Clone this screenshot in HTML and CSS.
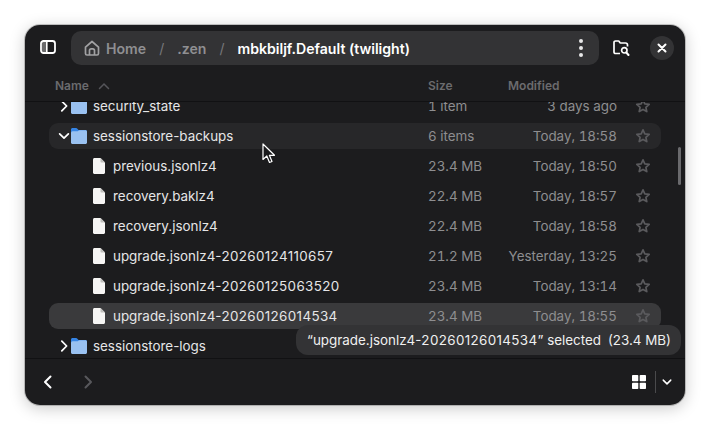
FILE: index.html
```html
<!DOCTYPE html>
<html lang="en">
<head>
<meta charset="utf-8">
<title>Files</title>
<link rel="stylesheet" href="styles.css">
</head>
<body>
<svg class="defs" width="0" height="0" aria-hidden="true">
  <defs>
    <symbol id="folder" viewBox="0 0 16 16">
      <path d="M0 1.5C0 .7.7 0 1.5 0H5c.6 0 1 .3 1.4.8L7.5 2H14.5C15.3 2 16 2.7 16 3.5V6H0Z" fill="#3584e4"/>
      <path d="M0 5C0 4 .7 3.300 1.500 3.300 3.500 3.300 5.500 3.300 6.200 3.300 7 3.300 7.500 2.200 8.500 2.200H14.500C15.300 2.200 16 2.900 16 3.700V14.500C16 15.300 15.300 16 14.500 16H1.500C.7 16 0 15.300 0 14.500Z" fill="#99c1f1"/>
    </symbol>
    <symbol id="file" viewBox="0 0 12 16">
      <path d="M1.500 0H7.500L12 4.500V14.500C12 15.300 11.300 16 10.500 16H1.500C.7 16 0 15.300 0 14.500V1.500C0 .7.7 0 1.500 0Z" fill="#f6f5f4"/>
      <path d="M7.500 0 12 4.500H8.500C7.900 4.500 7.500 4.100 7.500 3.500Z" fill="#c0bfbc"/>
    </symbol>
    <symbol id="star" viewBox="0 0 16 16">
      <path d="M8 1.900 9.800 5.900 14.200 6.400 10.900 9.300 11.800 13.600 8 11.400 4.200 13.600 5.100 9.300 1.800 6.400 6.200 5.900Z" fill="none" stroke="currentColor" stroke-width="1.700" stroke-linejoin="round"/>
    </symbol>
    <symbol id="right" viewBox="0 0 16 16">
      <path d="M5.500 2.500 11 8 5.500 13.500" fill="none" stroke="currentColor" stroke-width="2" stroke-linecap="round" stroke-linejoin="round"/>
    </symbol>
    <symbol id="down" viewBox="0 0 16 16">
      <path d="M3 5.500 8 10.500 13 5.500" fill="none" stroke="currentColor" stroke-width="2" stroke-linecap="round" stroke-linejoin="round"/>
    </symbol>
  </defs>
</svg>

<main class="window">
  <header class="headerbar">
    <button class="icon-btn sidebar-btn" aria-label="Toggle sidebar">
      <svg width="16" height="14" viewBox="0 0 16 14"><path d="M2 2H6V12H2Z" fill="#fff" fill-opacity=".35"/><rect x="1" y="1" width="14" height="12" rx="2.500" fill="none" stroke="#fff" stroke-width="1.800"/><path d="M6.800 1V13" stroke="#fff" stroke-width="1.600"/></svg>
    </button>
    <nav class="pathbar">
      <svg class="home" width="16" height="16" viewBox="0 0 16 16"><path d="M1.500 7.200 8 1.500 14.500 7.200V13.500C14.500 14.300 13.900 15 13 15H3C2.100 15 1.500 14.300 1.500 13.500Z M5.500 15V10.500C5.500 9.500 6.300 8.800 7.200 8.800H8.800C9.700 8.800 10.500 9.500 10.500 10.500V15" fill="none" stroke="#a1a1a3" stroke-width="1.700" stroke-linejoin="round"/></svg>
      <span class="crumb">Home</span>
      <span class="sep">/</span>
      <span class="crumb zen">.zen</span>
      <span class="sep">/</span>
      <span class="crumb current">mbkbiljf.Default (twilight)</span>
      <span class="kebab" aria-label="Menu"><i></i><i></i><i></i></span>
    </nav>
    <button class="icon-btn search-btn" aria-label="Search folder">
      <svg width="17" height="16" viewBox="0 0 17 16"><path d="M7 13.500H2.500C1.600 13.500 1 12.900 1 12V2.500C1 1.600 1.600 1 2.500 1H5.500C6.300 1 6.700 3 7.500 3H12.500C13.700 3 14.500 3.800 14.500 5V6.500" fill="none" stroke="#fff" stroke-width="1.700" stroke-linejoin="round"/><circle cx="11.300" cy="10.300" r="2.700" fill="none" stroke="#fff" stroke-width="1.700"/><path d="M13.300 12.500 15.500 15" stroke="#fff" stroke-width="2" stroke-linecap="round"/></svg>
    </button>
    <button class="close" aria-label="Close">
      <svg width="10" height="10" viewBox="0 0 10 10"><path d="M1.500 1.500 8.500 8.500M8.500 1.500 1.500 8.500" stroke="#fff" stroke-width="2" stroke-linecap="round"/></svg>
    </button>
  </header>

  <div class="colhead">
    <span class="col-name">Name<svg width="12" height="8" viewBox="0 0 12 8"><path d="M1.500 6.500 6 2 10.500 6.500" fill="none" stroke="#55555a" stroke-width="1.500" stroke-linecap="round"/></svg></span>
    <span class="col-size">Size</span>
    <span class="col-mod">Modified</span>
  </div>

  <section class="list">
    <div class="rows">
      <div class="row">
        <span class="name"><svg class="exp"><use href="#right"/></svg><svg class="folder"><use href="#folder"/></svg><span>security_state</span></span>
        <span class="size">1 item</span><span class="mod">3 days ago</span><svg class="star"><use href="#star"/></svg>
      </div>
      <div class="row hover">
        <span class="name"><svg class="exp"><use href="#down"/></svg><svg class="folder"><use href="#folder"/></svg><span>sessionstore-backups</span></span>
        <span class="size">6 items</span><span class="mod">Today, 18:58</span><svg class="star"><use href="#star"/></svg>
      </div>
      <div class="row child">
        <span class="name"><svg class="file"><use href="#file"/></svg><span>previous.jsonlz4</span></span>
        <span class="size">23.4 MB</span><span class="mod">Today, 18:50</span><svg class="star"><use href="#star"/></svg>
      </div>
      <div class="row child">
        <span class="name"><svg class="file"><use href="#file"/></svg><span>recovery.baklz4</span></span>
        <span class="size">22.4 MB</span><span class="mod">Today, 18:57</span><svg class="star"><use href="#star"/></svg>
      </div>
      <div class="row child">
        <span class="name"><svg class="file"><use href="#file"/></svg><span>recovery.jsonlz4</span></span>
        <span class="size">22.4 MB</span><span class="mod">Today, 18:58</span><svg class="star"><use href="#star"/></svg>
      </div>
      <div class="row child">
        <span class="name"><svg class="file"><use href="#file"/></svg><span>upgrade.jsonlz4-<span class="stamp">20260124110657</span></span></span>
        <span class="size">21.2 MB</span><span class="mod">Yesterday, 13:25</span><svg class="star"><use href="#star"/></svg>
      </div>
      <div class="row child">
        <span class="name"><svg class="file"><use href="#file"/></svg><span>upgrade.jsonlz4-<span class="stamp">20260125063520</span></span></span>
        <span class="size">23.4 MB</span><span class="mod">Today, 13:14</span><svg class="star"><use href="#star"/></svg>
      </div>
      <div class="row child selected">
        <span class="name"><svg class="file"><use href="#file"/></svg><span>upgrade.jsonlz4-<span class="stamp">20260126014534</span></span></span>
        <span class="size">23.4 MB</span><span class="mod">Today, 18:55</span><svg class="star"><use href="#star"/></svg>
      </div>
      <div class="row">
        <span class="name"><svg class="exp"><use href="#right"/></svg><svg class="folder"><use href="#folder"/></svg><span>sessionstore-logs</span></span>
      </div>
    </div>
    <div class="scrollbar"></div>
    <div class="toast"><span>“upgrade.jsonlz4-<span class="stamp">20260126014534</span>” selected</span><span>(23.4 MB)</span></div>
    <svg class="cursor" width="14" height="21" viewBox="0 0 14 21"><path d="M1 1V16.500L4.800 13 7.500 19.500 10 18.500 7.400 12.300H12.500Z" fill="#1a1a1c" stroke="#fff" stroke-width="1.200" stroke-linejoin="round"/></svg>
  </section>

  <footer class="footer">
    <svg class="nav" width="16" height="16"><path d="M10.500 2.500 5 8 10.500 13.500" fill="none" stroke="#fff" stroke-width="2" stroke-linecap="round" stroke-linejoin="round"/></svg>
    <svg class="nav fwd" width="16" height="16"><path d="M5.500 2.500 11 8 5.500 13.500" fill="none" stroke="#58585c" stroke-width="2" stroke-linecap="round" stroke-linejoin="round"/></svg>
    <div class="view">
      <svg width="14" height="14" viewBox="0 0 14 14"><g fill="#fff"><rect width="6.300" height="6.300" rx=".8"/><rect x="7.700" width="6.300" height="6.300" rx=".8"/><rect y="7.700" width="6.300" height="6.300" rx=".8"/><rect x="7.700" y="7.700" width="6.300" height="6.300" rx=".8"/></g></svg>
      <span class="divider"></span>
      <svg class="menu-chev" width="12" height="12" viewBox="0 0 16 16"><use href="#down"/></svg>
    </div>
  </footer>
</main>
</body>
</html>
```

FILE: styles.css
```css
* { box-sizing: border-box; }
html, body { margin: 0; height: 100%; }
body {
  background: #fff;
  padding: 25px;
  font-family: Inter, "Noto Sans", sans-serif;
  font-size: 13.400px;
  color: #fff;
  overflow: hidden;
}
.defs { position: absolute; }
button { border: 0; padding: 0; background: none; color: inherit; }

.window {
  width: 660px;
  height: 380px;
  background: #1c1c1e;
  border-radius: 15px;
  display: flex;
  flex-direction: column;
  overflow: hidden;
  box-shadow: 0 0 0 1px rgba(0,0,0,.2), 0 3px 16px rgba(0,0,0,.22);
}

.headerbar {
  height: 46px;
  flex: none;
  display: flex;
  align-items: flex-start;
  padding: 6px 8px 0 46px;
  position: relative;
}
.icon-btn { display: flex; align-items: center; justify-content: center; }
.sidebar-btn { position: absolute; left: 15px; top: 15px; }
.pathbar {
  width: 528px;
  height: 34px;
  background: #333335;
  border-radius: 10px;
  display: flex;
  align-items: center;
  padding: 0 13px;
  font-size: 14.100px;
  font-weight: 600;
}
.home { flex: none; margin-right: 6px; }
.crumb { color: #8f8f92; }
.crumb.current { color: #fff; }
.sep { color: #77777a; font-weight: 400; margin: 0 13px; }
.kebab { margin-left: auto; display: flex; flex-direction: column; gap: 3px; padding-right: 3px; }
.kebab i { width: 4px; height: 4px; border-radius: 50%; background: #e8e8e8; }
.search-btn { margin-left: 14px; width: 17px; height: 34px; }
.close {
  margin-left: 20px;
  margin-top: 5px;
  width: 24px;
  height: 24px;
  border-radius: 50%;
  background: #333335;
  display: flex;
  align-items: center;
  justify-content: center;
}

.colhead {
  height: 31px;
  flex: none;
  display: flex;
  align-items: flex-start;
  font-size: 12px;
  font-weight: 600;
  color: #6b6b6e;
  padding-top: 7px;
  border-bottom: 1px solid #111113;
}
.col-name { width: 403px; padding-left: 30px; display: flex; align-items: center; gap: 9px; }
.col-size { width: 80px; }

.list { flex: 1; min-height: 0; position: relative; overflow: hidden; }
.rows { margin-top: -11px; padding: 0 24px; display: flex; flex-direction: column; }
.row {
  flex: none;
  height: 26px;
  margin: 2px 0;
  border-radius: 9px;
  display: flex;
  align-items: center;
  color: #e6e6e7;
}
.row.hover { background: #272729; }
.row.selected { background: #3a3a3c; }
.name { width: 379px; padding-left: 8px; display: flex; align-items: center; }
.exp { width: 14px; height: 14px; color: #fff; flex: none; }
.folder { width: 16px; height: 16px; margin-right: 6px; flex: none; }
.child .name { padding-left: 44px; }
.file { width: 12px; height: 16px; margin-right: 8px; flex: none; }
.stamp { letter-spacing: .36px; }
.size { width: 69px; color: #8e8e90; font-variant-numeric: tabular-nums; }
.mod { width: 120px; color: #8e8e90; text-align: right; white-space: nowrap; font-variant-numeric: tabular-nums; }
.star { width: 16px; height: 16px; margin-left: 18px; color: #5a5a5d; flex: none; }

.scrollbar {
  position: absolute;
  right: 4px;
  top: 45px;
  width: 3px;
  height: 38px;
  border-radius: 2px;
  background: #6a6a6d;
}
.toast {
  position: absolute;
  left: 271px;
  top: 223px;
  width: 385px;
  height: 30px;
  border-radius: 12px;
  background: #333335;
  color: #f0f0f0;
  display: flex;
  align-items: center;
  gap: 7px;
  padding-left: 11px;
  white-space: nowrap;
}
.cursor { position: absolute; left: 237px; top: 41px; }

.footer {
  flex: none;
  height: 47px;
  border-top: 1px solid #111113;
  display: flex;
  align-items: center;
  padding: 0 12px 0 15px;
}
.nav { flex: none; }
.fwd { margin-left: 24px; }
.view { margin-left: auto; display: flex; align-items: center; }
.divider { width: 1px; height: 22px; background: #4a4a4c; margin: 0 5px 0 9px; }
.menu-chev { color: #fff; }
```
